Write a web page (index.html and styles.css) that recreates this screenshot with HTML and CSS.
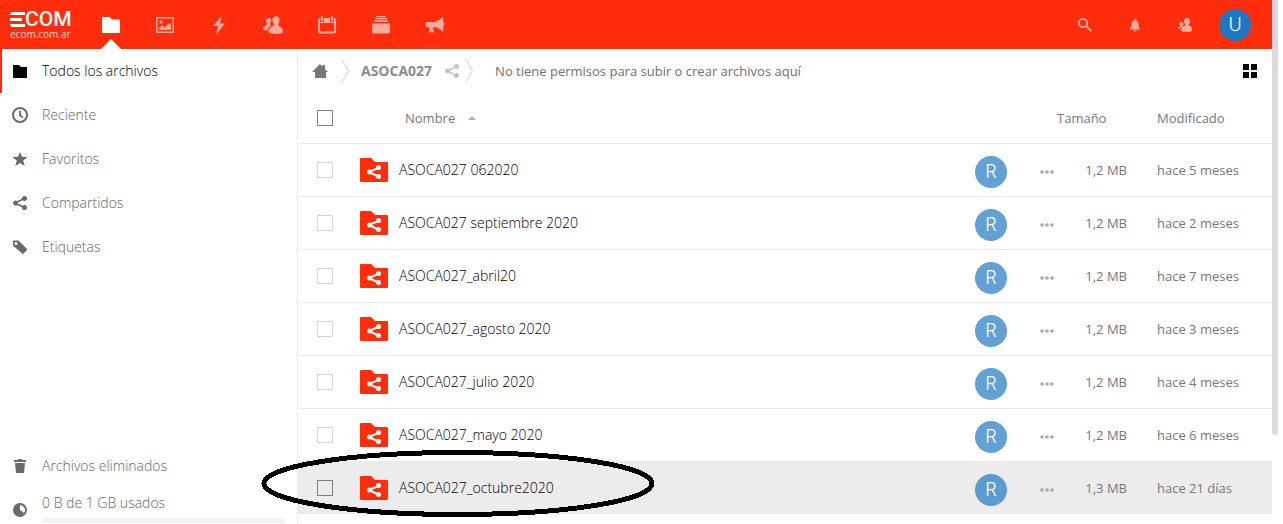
FILE: index.html
```html
<!DOCTYPE html>
<html lang="es">
<head>
<meta charset="utf-8">
<title>Archivos - ECOM</title>
<link rel="stylesheet" href="styles.css">
</head>
<body>
<svg class="defs" aria-hidden="true">
  <symbol id="folder" viewBox="0 0 16 16"><path d="M1 2h6l2 2h6v11H1z"/></symbol>
  <symbol id="share" viewBox="0 0 16 16"><path d="M12.500 1A2.500 2.500 0 0 0 10 3.700L5.200 6A2.500 2.500 0 1 0 5.200 10l4.800 2.300A2.500 2.500 0 1 0 10.800 10.700L6 8.400v-.8l4.800-2.300A2.500 2.500 0 1 0 12.500 1z"/></symbol>
  <symbol id="people" viewBox="0 0 20 20"><path d="M13 1.200c-2.200 0-3.600 1.500-3.600 3.700 0 1.500.5 2.600 1.200 3.700v1.900c-.6.800-4.400 1.700-5 4.400-.2 1-.1 1.700.1 2.400 1 1.100 4.500 1.700 7.500 1.700s5.600-.5 6.500-1.600c.2-.8.300-1.600.1-2.500-.5-2.500-3.800-3.500-4.500-4.400V8.600c.7-1 1.200-2.200 1.200-3.700 0-2.200-1.400-3.700-3.500-3.700zM5.500 3C4 3 3 4 3 5.500c0 1 .4 1.900.9 2.600v1.300C3.400 10 .8 10.800.3 12.600c-.2.800-.1 1.300 0 1.900.8.600 2.300.9 4 1 .6-2.800 2.500-4 4.100-4.900L7.200 9.400V8.100c.5-.7.900-1.600.9-2.600C8.100 4 7 3 5.500 3z"/></symbol>
  <symbol id="shared-folder" viewBox="0 0 28 24"><path class="fill-brand" d="M0 1q0-1 1-1h10l4 4h12q1 0 1 1v18q0 1-1 1H1q-1 0-1-1z"/><path class="line-white" d="M19 9.500L9 14l10 5"/><g class="fill-white"><circle cx="18.500" cy="9.500" r="2.500"/><circle cx="9.500" cy="14" r="2.500"/><circle cx="18.500" cy="18.500" r="2.500"/></g></symbol>
  <symbol id="dots" viewBox="0 0 14 4"><circle cx="2" cy="2" r="1.800"/><circle cx="7" cy="2" r="1.800"/><circle cx="12" cy="2" r="1.800"/></symbol>
</svg>
<div class="page">
  <div class="app">
    <header class="topbar">
      <a class="logo" href="#" aria-label="ECOM">
        <span class="logo-name"><svg class="logo-bars" viewBox="0 0 15 15"><path d="M1 0h14v3H0zM0 6h12v3H0zM0 12h15v3H1z"/></svg>COM</span>
        <span class="logo-site">ecom.com.ar</span>
      </a>
      <nav class="apps" aria-label="Aplicaciones">
        <a class="app-link current" href="#" aria-label="Archivos"><svg class="icon20" viewBox="0 0 20 20"><path d="M1.500 2H9l2 2.500h7.500q.5 0 .5.500v12.500q0 .5-.5.500h-17q-.5 0-.5-.5v-15q0-.5.500-.5z"/></svg></a>
        <a class="app-link" href="#" aria-label="Fotos"><svg class="icon20" viewBox="0 0 20 20"><path fill-rule="evenodd" d="M1 2h18v16H1zM2.500 3.500v13h15v-13zM4 15v-2l3-3 2.500 2.500L14.500 8 16 10v5z"/><circle cx="6" cy="7" r="1.700"/></svg></a>
        <a class="app-link" href="#" aria-label="Actividad"><svg class="icon20" viewBox="0 0 20 20"><path d="M12.500 1L4 11h5l-2 8.500L16 8.500h-5z"/></svg></a>
        <a class="app-link" href="#" aria-label="Contactos"><svg class="icon20"><use href="#people"/></svg></a>
        <a class="app-link" href="#" aria-label="Calendario"><svg class="icon20" viewBox="0 0 20 20"><path fill-rule="evenodd" d="M5 1q1.200 0 1.200 1.200v3q0 1.200-1.200 1.200T3.800 5.200v-3Q3.800 1 5 1zM15 1q1.200 0 1.200 1.200v3q0 1.200-1.200 1.200t-1.200-1.200v-3Q13.800 1 15 1zM1 5q0-2 2-2.200V7h4V3h6v4h4V2.800q2 .2 2 2.200v11.500q0 2-2 2H3q-2 0-2-2zM3 8v7.500q0 1 1 1h12q1 0 1-1V8z"/></svg></a>
        <a class="app-link" href="#" aria-label="Deck"><svg class="icon20" viewBox="0 0 20 20"><path d="M5 1h10v1.200H5zM4 3h12v1.300H4zM3 5.200h14v1.500H3zM1 8.500h18V17q0 1.500-1.500 1.500h-15Q1 18.500 1 17z"/></svg></a>
        <a class="app-link" href="#" aria-label="Anuncios"><svg class="icon20" viewBox="0 0 20 20"><path d="M17.500 2q.8 0 .8 5.500 1.200.5 1.200 1.500t-1.200 1.500q0 6.500-.8 6.500-3-4-8-5L8 13l1 4.500H4.500L4 12.500Q1.500 12.500.800 11q-.8-2.500.7-4H9q5-1 8.500-5z"/></svg></a>
      </nav>
      <div class="tools">
        <button class="tool" aria-label="Buscar"><svg class="icon16" viewBox="0 0 16 16"><path fill-rule="evenodd" d="M6 1a5 5 0 1 0 2.800 9.100l4.700 4.700 1.500-1.500-4.700-4.600A5 5 0 0 0 6 1zm0 1.800a3.200 3.200 0 1 1 0 6.400 3.200 3.200 0 0 1 0-6.400z"/></svg></button>
        <button class="tool" aria-label="Notificaciones"><svg class="icon16" viewBox="0 0 16 16"><path d="M8 2q-1 0-1 1Q4.500 4 4.500 7 4.500 10 3 11.500V12.500h10v-1Q11.500 10 11.500 7 11.500 4 9 3 9 2 8 2zM6 13.200q.5 1.300 2 1.300t2-1.300z"/></svg></button>
        <button class="tool" aria-label="Contactos"><svg class="icon16" viewBox="0 0 16 16"><path d="M10 1Q7 1 7 4.500 7 6 8 7v1.500Q4 9.500 4 12v2q2 1 6 1t5-1v-2q0-2.500-3-3.500V7q1-1 1-2.500Q13 1 10 1zM4.500 5Q2.500 5 2.500 7q0 1 .5 1.500V9.500Q1 10 1 12h2q.3-2 3-3.500Q6.500 8 6.500 7q0-2-2-2z"/></svg></button>
        <button class="tool" aria-label="Ajustes"><span class="avatar user">U</span></button>
      </div>
    </header>
    <div class="body">
      <nav class="sidebar" aria-label="Archivos">
        <a class="side-link active" href="#"><svg class="icon16"><use href="#folder"/></svg>Todos los archivos</a>
        <a class="side-link" href="#"><svg class="icon16" viewBox="0 0 16 16"><path fill-rule="evenodd" d="M8 0a8 8 0 1 0 0 16A8 8 0 0 0 8 0zm0 2a6 6 0 1 1 0 12A6 6 0 0 1 8 2zM7.200 3.500L7 8.500l3.500 2.700 1-1L9 7.700 8.700 3.500z"/></svg>Reciente</a>
        <a class="side-link" href="#"><svg class="icon16" viewBox="0 0 16 16"><path d="M8 .7l2 5.100 5.600.3-4.400 3.500 1.500 5.500L8 12l-4.700 3.100 1.500-5.500L.4 6.100 6 5.800z"/></svg>Favoritos</a>
        <a class="side-link" href="#"><svg class="icon16"><use href="#share"/></svg>Compartidos</a>
        <a class="side-link" href="#"><svg class="icon16" viewBox="0 0 16 16"><path fill-rule="evenodd" d="M1 1.500h5.500L15 10q.3.500 0 1l-3.700 3.700q-.5.300-1 0L1 6.500zM4 3a1.500 1.500 0 1 0 0 3 1.500 1.500 0 0 0 0-3z"/></svg>Etiquetas</a>
        <div class="side-end">
          <a class="side-link" href="#"><svg class="icon16" viewBox="0 0 16 16"><path d="M6.500 1h3l.7 1H14v2H2V2h3.800zM3 5h10l-1 10H4z"/></svg>Archivos eliminados</a>
          <a class="side-link quota" href="#"><svg class="icon16" viewBox="0 0 16 16"><path fill-rule="evenodd" d="M8 1a7 7 0 1 0 0 14A7 7 0 0 0 8 1zM8 3a5 5 0 0 1 4 8L8 8z"/></svg>
            <span class="quota-body">0 B de 1 GB usados<span class="quota-bar"></span></span></a>
        </div>
      </nav>
      <main class="content">
        <div class="crumbs">
          <a class="home" href="#" aria-label="Inicio"><svg class="icon16" viewBox="0 0 16 16"><path d="M8 1l2.500 2.500V2H13v4l3 3h-2v6H3V9H0z"/></svg></a>
          <svg class="chevron" viewBox="0 0 8 24"><path d="M.5 0l7 12-7 12"/></svg>
          <a class="crumb" href="#">ASOCA027</a>
          <button class="share" aria-label="Compartir"><svg class="icon16"><use href="#share"/></svg></button>
          <svg class="chevron" viewBox="0 0 8 24"><path d="M.5 0l7 12-7 12"/></svg>
          <span class="notice">No tiene permisos para subir o crear archivos aquí</span>
          <button class="grid-toggle" aria-label="Vista de cuadrícula"><svg class="icon14" viewBox="0 0 14 14"><path d="M0 0h6v6H0zM8 0h6v6H8zM0 8h6v6H0zM8 8h6v6H8z"/></svg></button>
        </div>
        <table class="files">
          <thead>
            <tr>
              <th class="c-check"><input class="check strong" type="checkbox" aria-label="Seleccionar todo"></th>
              <th class="c-name"><button class="sort">Nombre<svg class="caret" viewBox="0 0 8 4"><path d="M4 0l4 4H0z"/></svg></button></th>
              <th class="c-avatar"></th>
              <th class="c-more"></th>
              <th class="c-size">Tamaño</th>
              <th class="c-date">Modificado</th>
            </tr>
          </thead>
          <tbody>
            <tr><td><input class="check" type="checkbox" aria-label="ASOCA027 062020"></td><td><a class="file" href="#"><svg class="file-icon"><use href="#shared-folder"/></svg>ASOCA027 062020</a></td><td><span class="avatar">R</span></td><td><button class="more" aria-label="Acciones"><svg class="dots"><use href="#dots"/></svg></button></td><td class="size">1,2 MB</td><td class="date">hace 5 meses</td></tr>
            <tr><td><input class="check" type="checkbox" aria-label="ASOCA027 septiembre 2020"></td><td><a class="file" href="#"><svg class="file-icon"><use href="#shared-folder"/></svg>ASOCA027 septiembre 2020</a></td><td><span class="avatar">R</span></td><td><button class="more" aria-label="Acciones"><svg class="dots"><use href="#dots"/></svg></button></td><td class="size">1,2 MB</td><td class="date">hace 2 meses</td></tr>
            <tr><td><input class="check" type="checkbox" aria-label="ASOCA027_abril20"></td><td><a class="file" href="#"><svg class="file-icon"><use href="#shared-folder"/></svg>ASOCA027_abril20</a></td><td><span class="avatar">R</span></td><td><button class="more" aria-label="Acciones"><svg class="dots"><use href="#dots"/></svg></button></td><td class="size">1,2 MB</td><td class="date">hace 7 meses</td></tr>
            <tr><td><input class="check" type="checkbox" aria-label="ASOCA027_agosto 2020"></td><td><a class="file" href="#"><svg class="file-icon"><use href="#shared-folder"/></svg>ASOCA027_agosto 2020</a></td><td><span class="avatar">R</span></td><td><button class="more" aria-label="Acciones"><svg class="dots"><use href="#dots"/></svg></button></td><td class="size">1,2 MB</td><td class="date">hace 3 meses</td></tr>
            <tr><td><input class="check" type="checkbox" aria-label="ASOCA027_julio 2020"></td><td><a class="file" href="#"><svg class="file-icon"><use href="#shared-folder"/></svg>ASOCA027_julio 2020</a></td><td><span class="avatar">R</span></td><td><button class="more" aria-label="Acciones"><svg class="dots"><use href="#dots"/></svg></button></td><td class="size">1,2 MB</td><td class="date">hace 4 meses</td></tr>
            <tr><td><input class="check" type="checkbox" aria-label="ASOCA027_mayo 2020"></td><td><a class="file" href="#"><svg class="file-icon"><use href="#shared-folder"/></svg>ASOCA027_mayo 2020</a></td><td><span class="avatar">R</span></td><td><button class="more" aria-label="Acciones"><svg class="dots"><use href="#dots"/></svg></button></td><td class="size">1,2 MB</td><td class="date">hace 6 meses</td></tr>
            <tr class="hovered"><td><input class="check strong" type="checkbox" aria-label="ASOCA027_octubre2020"></td><td><a class="file" href="#"><svg class="file-icon"><use href="#shared-folder"/></svg>ASOCA027_octubre2020</a></td><td><span class="avatar">R</span></td><td><button class="more" aria-label="Acciones"><svg class="dots"><use href="#dots"/></svg></button></td><td class="size">1,3 MB</td><td class="date">hace 21 días</td></tr>
          </tbody>
        </table>
      </main>
    </div>
  </div>
  <div class="scroll"><div class="thumb"></div></div>
  <svg class="ring" viewBox="0 0 394 67" aria-hidden="true"><ellipse cx="197" cy="33.500" rx="194" ry="31"/></svg>
</div>
</body>
</html>
```
FILE: styles.css
```css
* { box-sizing: border-box; }
body {
  margin: 0;
  background: #fff;
  color: #777;
  font: 300 14px/20px "Open Sans", "Noto Sans", sans-serif;
  overflow: hidden;
}
a { color: inherit; text-decoration: none; }
button { border: 0; padding: 0; margin: 0; background: none; color: inherit; font: inherit; }
svg { display: block; flex: none; fill: currentColor; }
.defs { position: absolute; width: 0; height: 0; }
.icon20 { width: 20px; height: 20px; }
.icon16 { width: 16px; height: 16px; }
.icon14 { width: 14px; height: 14px; }
.fill-brand { fill: #ff2d0c; }
.fill-white { fill: #fff; }
.line-white { fill: none; stroke: #fff; stroke-width: 2; }

.page { position: relative; display: flex; height: 100vh; padding-right: 5px; }
.app { flex: 1; min-width: 0; display: flex; flex-direction: column; }
.scroll { width: 6px; }
.thumb { height: 83%; background: #dadada; border-radius: 0 0 3px 3px; }

.topbar { display: flex; height: 49px; flex: none; padding: 0 12px 0 10px; background: #ff2d0c; color: #fff; }
.logo { display: flex; flex-direction: column; width: 74px; padding-top: 10px; }
.logo-name { display: flex; align-items: center; font: 500 21px/19px Roboto, sans-serif; }
.logo-bars { width: 15px; height: 15px; }
.logo-site { font: 10px/10px "Open Sans", sans-serif; opacity: .8; }
.apps { display: flex; }
.app-link { display: flex; align-items: center; justify-content: center; width: 54px; position: relative; color: #ffaa9d; }
.app-link.current { color: #fff; }
.app-link.current::after {
  content: "";
  position: absolute;
  bottom: 0;
  left: 17px;
  border: 10px solid transparent;
  border-top: 0;
  border-bottom-color: #fff;
}
.tools { display: flex; margin-left: auto; }
.tool { display: flex; align-items: center; justify-content: center; width: 50px; color: #ffaa9d; }
.avatar { display: block; width: 32px; height: 32px; border-radius: 50%; background: #61a1d5; color: #fff; font: 300 18px/32px Inter, sans-serif; text-align: center; }
.avatar.user { background: #1f77c4; }

.body { display: flex; flex: 1; min-height: 0; }
.sidebar { display: flex; flex-direction: column; width: 298px; flex: none; border-right: 1px solid #ebebeb; }
.side-link { display: flex; align-items: center; gap: 14px; height: 44px; flex: none; padding-left: 12px; color: #666; }
.side-link > svg { color: #6a6a6a; }
.side-link.active { color: #000; border-left: 2px solid #ff2d0c; padding-left: 10px; }
.side-link.active > svg { color: #000; }
.side-end { margin-top: auto; height: 80px; flex: none; }
.quota-body { flex: 1; margin-right: 12px; padding-bottom: 4px; }
.quota-bar { display: block; height: 5px; margin-top: 5px; border-radius: 3px; background: #f2f2f2; }

.content { flex: 1; min-width: 0; }
.crumbs { display: flex; align-items: center; height: 44px; padding: 0 15px 0 14px; }
.chevron { width: 8px; height: 24px; margin-left: 13px; fill: none; stroke: #d8d8d8; }
.crumb { margin-left: 12px; font-weight: bold; color: #8c8c8c; }
.home { color: #777; }
.share { margin-left: 12px; color: #c4c4c4; }
.share + .chevron { margin-left: 5px; }
.notice { margin-left: 22px; color: #6f6f6f; }
.notice, th, .size, .date { font-size: 13px; font-weight: 400; }
.grid-toggle { margin-left: auto; color: #000; }

.files { width: 100%; table-layout: fixed; border-collapse: collapse; }
th, td { padding: 0; text-align: left; vertical-align: middle; }
th { height: 50px; }
td { height: 53px; }
tr { border-bottom: 1px solid #ebebeb; }
.c-check { width: 62px; }
.c-avatar { width: 55px; }
.c-more { width: 27px; }
.c-size { width: 80px; }
.c-date { width: 135px; padding-left: 20px; }
.date { padding-left: 20px; }
.size { padding-right: 10px; text-align: right; }
.check { display: block; appearance: none; width: 16px; height: 16px; margin: 0 0 0 19px; border: 1px solid #d6d6d6; background: transparent; }
.check.strong { border-color: #808080; }
.sort { display: flex; align-items: center; gap: 13px; padding-left: 45px; }
.caret { width: 8px; height: 4px; color: #b0b0b0; }
.file { display: flex; align-items: center; gap: 11px; color: #000; }
.file-icon { width: 28px; height: 24px; }
td .avatar { margin-top: 4px; }
.more { display: block; padding: 4px 0 0 10px; color: #aaa; }
.dots { width: 14px; height: 4px; }
.hovered { background: #ececec; border-color: transparent; }
.hovered .avatar { background: #5b9bd0; }

.ring { position: absolute; left: 261px; top: 450px; width: 394px; height: 67px; fill: none; stroke: #000; stroke-width: 5; shape-rendering: crispEdges; pointer-events: none; }
```
